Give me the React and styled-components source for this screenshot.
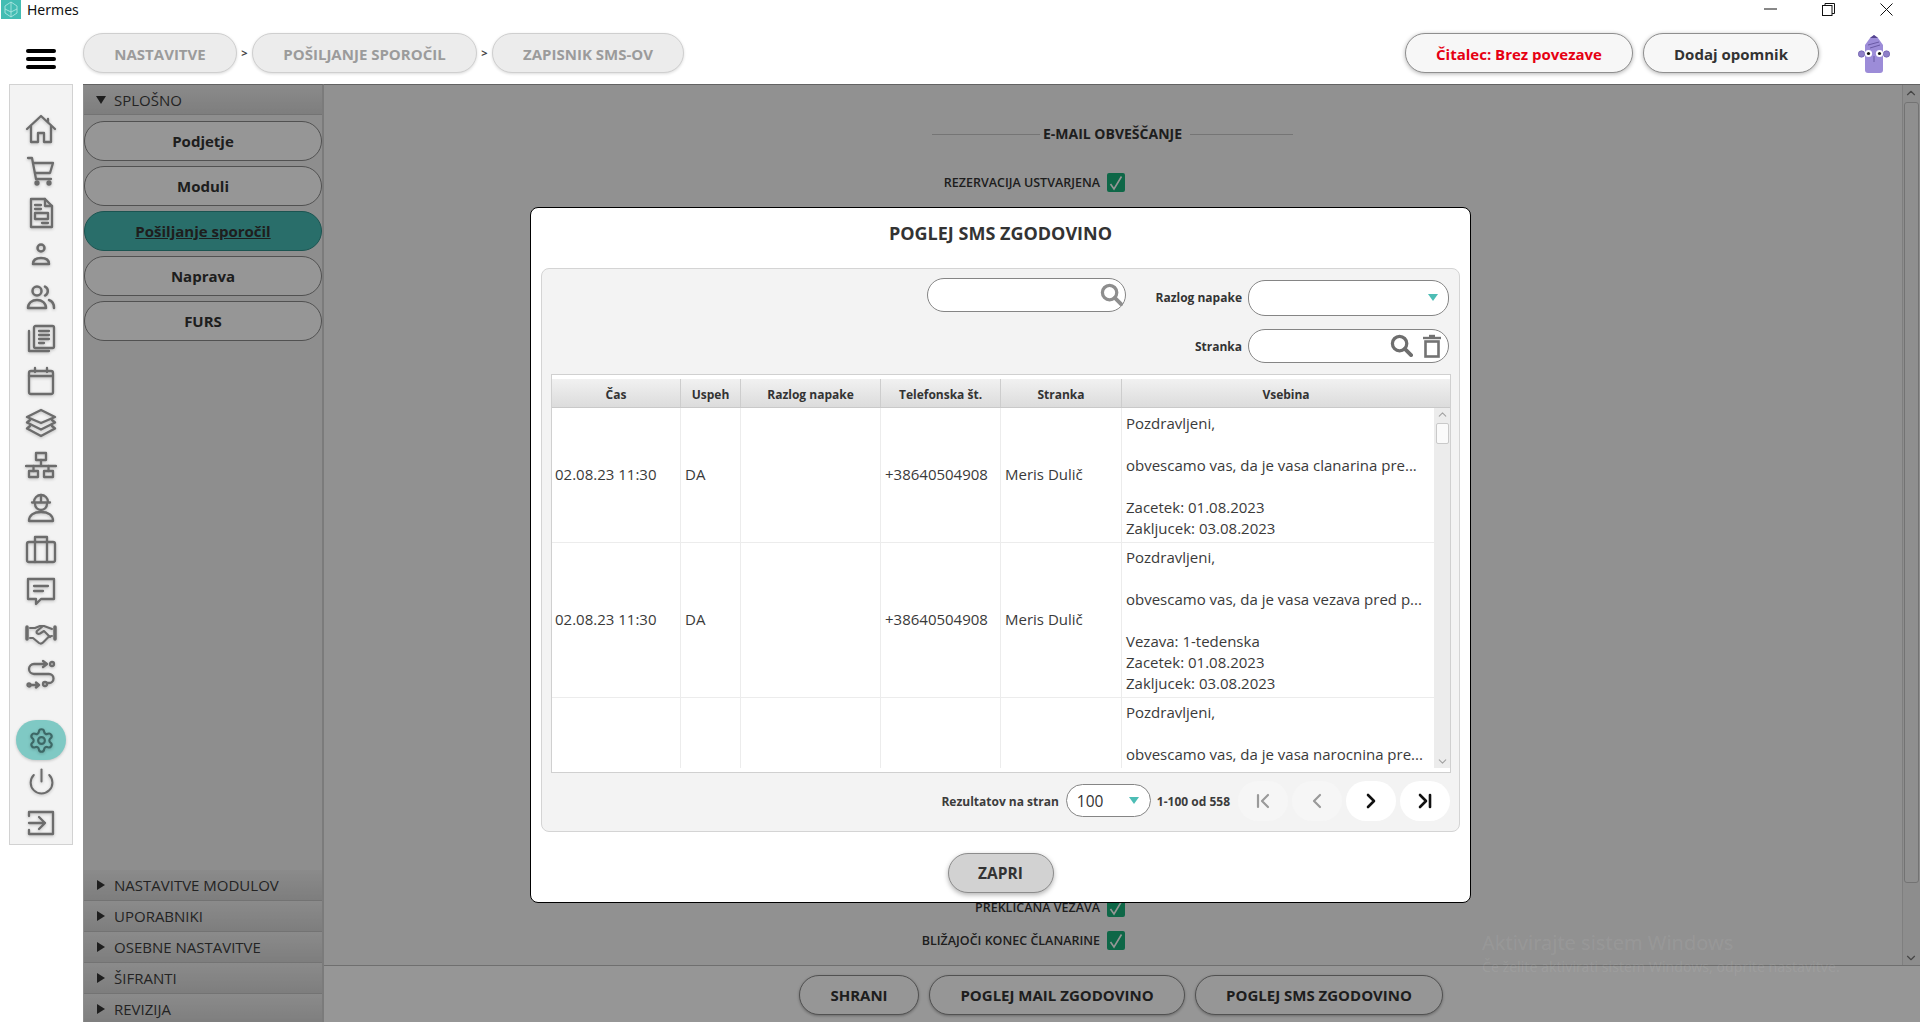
import React from 'react';
import styled, { createGlobalStyle } from 'styled-components';
import { Settings, Power, ChevronFirst, ChevronLeft, ChevronRight, ChevronLast, ChevronUp, ChevronDown } from 'lucide-react';

const Global = createGlobalStyle`
  html, body { margin: 0; padding: 0; background: #fff; }
  * { box-sizing: border-box; }
  #root { width: 1920px; height: 1022px; overflow: hidden; }
`;

const Page = styled.div`
  position: relative;
  width: 1920px;
  height: 1022px;
  overflow: hidden;
  background: #fff;
  font-family: "Open Sans", "Noto Sans", "Liberation Sans", sans-serif;
  color: #333;
`;

/* ---------- header ---------- */
const Header = styled.header`
  height: 84px;
  display: flex;
  flex-direction: column;
`;
const TitleBar = styled.div`
  height: 20px;
  display: flex;
  align-items: flex-start;
  padding: 0 5px 0 1px;
`;
const AppLogo = styled.svg`
  width: 20px;
  height: 19px;
  display: block;
`;
const AppName = styled.span`
  margin-left: 6px;
  font-size: 14px;
  line-height: 19px;
  color: #111;
  font-family: "Noto Sans", "Open Sans", sans-serif;
`;
const WindowControls = styled.div`
  margin-left: auto;
  display: flex;
`;
const WindowButton = styled.div`
  width: 58px;
  height: 18px;
  display: flex;
  align-items: center;
  justify-content: center;
  svg { display: block; }
`;
const Toolbar = styled.div`
  display: flex;
  align-items: flex-start;
  padding: 13px 30px 0 26px;
`;
const Hamburger = styled.div`
  width: 30px;
  height: 20px;
  margin: 16px 27px 0 0;
  display: flex;
  flex-direction: column;
  justify-content: space-between;
  span {
    display: block;
    height: 4px;
    border-radius: 2px;
    background: #000;
  }
`;
const Crumb = styled.div`
  width: ${(p) => p.$w}px;
  height: 40px;
  border-radius: 20px;
  border: 1px solid #cfcfcf;
  background: #ececec;
  box-shadow: 0 1px 3px rgba(0, 0, 0, 0.14);
  display: flex;
  align-items: center;
  justify-content: center;
  padding-top: 1px;
  font-size: 15px;
  font-weight: 700;
  color: #9b9b9b;
`;
const CrumbSep = styled.span`
  width: 15px;
  text-align: center;
  font-size: 11px;
  font-weight: 700;
  line-height: 40px;
  color: #444;
`;
const RightTools = styled.div`
  margin-left: auto;
  display: flex;
  align-items: flex-start;
  gap: 10px;
`;
const ToolPill = styled.button`
  width: ${(p) => p.$w}px;
  height: 40px;
  border-radius: 20px;
  border: 1px solid #8f8f8f;
  background: #f7f7f7;
  box-shadow: 0 1px 4px rgba(0, 0, 0, 0.3);
  font-family: inherit;
  font-size: 15px;
  font-weight: 700;
  color: ${(p) => (p.$alert ? '#e60012' : '#333')};
  padding: 1px 0 0;
`;
const Mascot = styled.svg`
  width: 32px;
  height: 38px;
  margin: 2px 0 0 29px;
  display: block;
`;

/* ---------- body ---------- */
const Body = styled.div`
  height: 938px;
  display: flex;
  overflow: hidden;
`;
const RailColumn = styled.div`
  width: 83px;
  padding-left: 9px;
`;
const Rail = styled.nav`
  width: 64px;
  height: 761px;
  background: #f3f3f3;
  border: 1px solid #d2d2d2;
  padding-top: 23px;
  display: flex;
  flex-direction: column;
  align-items: center;
`;
const RailSlot = styled.div`
  width: 50px;
  height: ${(p) => (p.$active ? 40 : 42)}px;
  margin-top: ${(p) => (p.$gap ? 24 : 0)}px;
  flex: none;
  display: flex;
  align-items: center;
  justify-content: center;
  border-radius: 20px;
  background: ${(p) => (p.$active ? '#7fc9c4' : 'transparent')};
  box-shadow: ${(p) => (p.$active ? '0 1px 3px rgba(0,0,0,.2)' : 'none')};
  color: ${(p) => (p.$active ? '#3d6866' : '#6c6c6c')};
  svg {
    display: block;
    filter: drop-shadow(0 1px 1.5px rgba(0, 0, 0, 0.22));
  }
`;

const Nav = styled.aside`
  width: 241px;
  height: 938px;
  overflow: hidden;
  background: #f2f2f2;
  border-top: 1px solid #a8a8a8;
  border-right: 2px solid #d2d2d2;
  display: flex;
  flex-direction: column;
  padding-left: 1px;
`;
const SectionHead = styled.div`
  height: ${(p) => p.$h || 31}px;
  flex: none;
  display: flex;
  align-items: center;
  padding-left: 12px;
  background: linear-gradient(#ececec, #d6d6d6);
  border-bottom: 1px solid #c4c4c4;
  font-size: 15px;
  color: #3c3c3c;
`;
const Caret = styled.span`
  width: 0;
  height: 0;
  margin-right: ${(p) => (p.$open ? 8 : 9)}px;
  border-style: solid;
  ${(p) =>
    p.$open
      ? 'border-width: 8px 5.5px 0 5.5px; border-color: #333 transparent transparent transparent;'
      : 'border-width: 5px 0 5px 8px; margin-left: 1px; border-color: transparent transparent transparent #333;'}
`;
const NavButtons = styled.div`
  height: 755px;
  flex: none;
  display: flex;
  flex-direction: column;
  gap: 5px;
  padding-top: 6px;
`;
const NavButton = styled.div`
  height: 40px;
  flex: none;
  border-radius: 20px;
  border: 1.5px solid ${(p) => (p.$active ? '#2f8f8a' : '#8a8a8a')};
  background: ${(p) => (p.$active ? '#47bcb5' : '#fff')};
  display: flex;
  align-items: center;
  justify-content: center;
  font-size: 15px;
  font-weight: 700;
  color: #333;
  text-decoration: ${(p) => (p.$active ? 'underline' : 'none')};
`;

const Content = styled.main`
  flex: 1;
  display: flex;
  flex-direction: column;
  min-width: 0;
  border-top: 1px solid #a8a8a8;
`;
const ContentTop = styled.div`
  flex: 1;
  display: flex;
  background: #f7f7f7;
  min-height: 0;
`;
const Form = styled.div`
  flex: 1;
  display: flex;
  flex-direction: column;
  padding-top: 39px;
`;
const FormHeading = styled.div`
  display: grid;
  grid-template-columns: 1fr auto 720px;
  align-items: center;
  font-size: 14px;
  font-weight: 700;
  color: #333;
  line-height: 20px;
`;
const HeadingRule = styled.i`
  display: block;
  height: 1px;
  background: #c8c8c8;
  width: ${(p) => p.$w}px;
  margin: ${(p) => p.$m};
`;
const FormRow = styled.label`
  display: grid;
  grid-template-columns: 1fr 18px 770px;
  column-gap: 7px;
  align-items: center;
  margin-top: ${(p) => p.$mt}px;
  height: 19px;
  font-size: 12.5px;
  font-weight: 600;
  color: #333;
  span { justify-self: end; }
`;
const CheckBox = styled.div`
  width: 18px;
  height: 19px;
  border-radius: 2px;
  background: #18b07a;
  display: flex;
  align-items: center;
  justify-content: center;
  svg { display: block; }
`;
const PageScroll = styled.div`
  width: 18px;
  flex: none;
  border-left: 1px solid #d8d8d8;
  background: #f0f0f0;
  display: flex;
  flex-direction: column;
  align-items: center;
  color: #777;
  padding: 1px 1px 0 0;
`;
const PageThumb = styled.div`
  width: 15px;
  height: 781px;
  margin-top: 2px;
  flex: none;
  border: 1px solid #c4c4c4;
  border-radius: 3px;
  background: #f4f4f4;
`;
const ScrollSpacer = styled.div`
  flex: 1;
`;
const BottomBar = styled.div`
  height: 57px;
  flex: none;
  background: #fff;
  border-top: 1px solid #bdbdbd;
  display: flex;
  justify-content: center;
  gap: 10px;
  padding: 9px 2px 0 0;
`;
const ActionButton = styled.button`
  width: ${(p) => p.$w}px;
  height: 40px;
  border-radius: 20px;
  border: 1.5px solid #8a8a8a;
  background: #fff;
  box-shadow: 0 1px 3px rgba(0, 0, 0, 0.3);
  font-family: inherit;
  font-size: 15px;
  font-weight: 700;
  color: #333;
  padding: 0;
`;

/* ---------- overlay ---------- */
const Backdrop = styled.div`
  position: absolute;
  left: 83px;
  top: 84px;
  right: 0;
  bottom: 0;
  background: rgba(0, 0, 0, 0.41);
`;
const Watermark = styled.div`
  position: absolute;
  left: 1482px;
  top: 929px;
  color: rgba(255, 255, 255, 0.085);
  font-family: "Noto Sans", sans-serif;
  font-size: 20px;
  line-height: 28px;
  small {
    display: block;
    font-size: 14.1px;
    line-height: 20px;
  }
`;
const ModalLayer = styled.div`
  position: absolute;
  left: 83px;
  top: 84px;
  right: 0;
  bottom: 0;
  display: flex;
  align-items: center;
  justify-content: center;
  padding: 4px 2px 0 0;
`;
const Modal = styled.section`
  width: 941px;
  height: 696px;
  background: #fff;
  border: 1.5px solid #000;
  border-radius: 8px;
  padding: 0 10px;
  display: flex;
  flex-direction: column;
`;
const ModalTitle = styled.h2`
  margin: 0;
  height: 59.5px;
  flex: none;
  display: flex;
  align-items: center;
  justify-content: center;
  padding-bottom: 10px;
  font-size: 18px;
  font-weight: 700;
  color: #333;
`;
const Panel = styled.div`
  height: 564px;
  flex: none;
  background: #f3f3f3;
  border: 1px solid #d4d4d4;
  border-radius: 8px;
  padding: 9px 8px 10px 9px;
  display: flex;
  flex-direction: column;
`;
const FilterRow = styled.div`
  display: flex;
  justify-content: flex-end;
  padding-right: 2px;
  height: ${(p) => p.$h}px;
  margin-top: ${(p) => p.$mt || 0}px;
  flex: none;
`;
const FilterLabel = styled.span`
  font-size: 12px;
  font-weight: 700;
  color: #333;
  margin-right: 6px;
  align-self: center;
  padding-top: ${(p) => p.$pt || 0}px;
`;
const InputShell = styled.div`
  width: ${(p) => p.$w}px;
  height: ${(p) => p.$h}px;
  margin: ${(p) => p.$m || 0};
  align-self: ${(p) => p.$align || 'flex-start'};
  border: 1px solid #858585;
  border-radius: 17px;
  background: #fff;
  display: flex;
  align-items: center;
  justify-content: flex-end;
  padding-right: ${(p) => p.$pr || 4}px;
  gap: ${(p) => p.$gap || 0}px;
  svg { display: block; }
`;
const Triangle = styled.i`
  display: block;
  width: 0;
  height: 0;
  border-style: solid;
  border-width: 7px 5.5px 0 5.5px;
  border-color: #4dbdb5 transparent transparent transparent;
`;

const TableFrame = styled.div`
  height: 399px;
  margin-top: 11px;
  flex: none;
  background: #fff;
  border: 1px solid #d0d0d0;
  padding-top: 4px;
  display: flex;
  flex-direction: column;
`;
const GridRow = styled.div`
  display: grid;
  grid-template-columns: 128px 60px 140px 120px 121px 1fr;
`;
const TableHead = styled(GridRow)`
  height: 29px;
  flex: none;
  background: linear-gradient(#f1f1f1, #dcdcdc);
  border-bottom: 1px solid #c9c9c9;
`;
const HeadCell = styled.div`
  display: flex;
  align-items: center;
  justify-content: center;
  padding-top: 3px;
  font-size: 12px;
  font-weight: 700;
  color: #333;
  border-left: ${(p) => (p.$first ? 'none' : '1px solid #cdcdcd')};
`;
const TableBody = styled.div`
  height: 360px;
  flex: none;
  display: flex;
`;
const Rows = styled.div`
  flex: 1;
  min-width: 0;
  overflow: hidden;
  display: flex;
  flex-direction: column;
`;
const Row = styled(GridRow)`
  flex: ${(p) => (p.$fill ? '1' : 'none')};
  border-bottom: ${(p) => (p.$fill ? 'none' : '1px solid #ececec')};
`;
const Cell = styled.div`
  display: flex;
  align-items: center;
  padding: 4px 4px 4px ${(p) => (p.$first ? 3 : 4)}px;
  font-size: 15px;
  line-height: 21px;
  color: #3a3a3a;
  white-space: nowrap;
  border-left: ${(p) => (p.$first ? 'none' : '1px solid #ececec')};
`;
const MessageCell = styled.div`
  padding: ${(p) => p.$pt}px 4px 3px;
  font-size: 15px;
  line-height: 21px;
  color: #3a3a3a;
  white-space: pre;
  border-left: 1px solid #ececec;
`;
const MiniScroll = styled.div`
  width: 16px;
  flex: none;
  background: #ececec;
  display: flex;
  flex-direction: column;
  align-items: center;
  color: #a2a2a2;
  svg { display: block; flex: none; }
`;
const MiniThumb = styled.div`
  width: 13px;
  height: 21px;
  margin-top: 2px;
  flex: none;
  background: #fafafa;
  border: 1px solid #c9c9c9;
  border-radius: 2px;
`;
const Pager = styled.div`
  height: 40px;
  margin-top: 8px;
  flex: none;
  display: flex;
  align-items: center;
  justify-content: flex-end;
  padding-right: 1px;
`;
const PagerText = styled.span`
  font-size: 12px;
  font-weight: 700;
  color: #3c3c3c;
  margin: ${(p) => p.$m};
  padding-top: 1px;
`;
const PageSize = styled.div`
  width: 85px;
  height: 33px;
  border: 1px solid #858585;
  border-radius: 17px;
  background: #fff;
  display: flex;
  align-items: center;
  justify-content: space-between;
  padding: 0 11px 0 10px;
  font-size: 15.5px;
  color: #333;
`;
const PagerButtons = styled.div`
  display: flex;
  gap: 4px;
  margin-left: 8px;
`;
const PagerButton = styled.div`
  width: 50px;
  height: 40px;
  border-radius: 20px;
  display: flex;
  align-items: center;
  justify-content: center;
  background: ${(p) => (p.$off ? '#f6f6f6' : '#fff')};
  color: ${(p) => (p.$off ? '#9a9a9a' : '#111')};
  svg { display: block; }
`;
const CloseArea = styled.div`
  flex: 1;
  display: flex;
  justify-content: center;
  padding-top: 21px;
`;
const CloseButton = styled.button`
  width: 106px;
  height: 40px;
  border-radius: 20px;
  border: 1px solid #8c8c8c;
  background: #d2d2d2;
  box-shadow: 0 2px 5px rgba(0, 0, 0, 0.3);
  font-family: inherit;
  font-size: 15.5px;
  font-weight: 700;
  color: #333;
  padding: 1px 0 0;
`;

/* ---------- drawn icons ---------- */
const Ico = ({ children, size = 32, sw = 2.3 }) => (
  <svg width={size} height={size} viewBox="0 0 32 32" fill="none" stroke="currentColor" strokeWidth={sw} strokeLinecap="round" strokeLinejoin="round">
    {children}
  </svg>
);
const HomeIcon = () => (
  <Ico>
    <path d="M2 16 16 3l14 13" />
    <path d="M23 6v3" />
    <path d="M6 13v16h7v-9h6v9h7V13" />
  </Ico>
);
const CartIcon = () => (
  <Ico>
    <path d="M3 3h4l4 21h15" />
    <path d="M8 8h20l-3 10H10" />
    <circle cx="12" cy="28" r="1.500" fill="currentColor" />
    <circle cx="24" cy="28" r="1.500" fill="currentColor" />
  </Ico>
);
const DocIcon = () => (
  <Ico>
    <path d="M6 2h14l7 7v21H6z" />
    <path d="M20 2v7h7" />
    <path d="M10 8h6M10 12h6" />
    <rect x="10" y="16" width="13" height="6" />
    <path d="M17 26h6" />
  </Ico>
);
const PersonIcon = () => (
  <Ico sw={2.500}>
    <circle cx="16" cy="9" r="3.500" />
    <path d="M8 25c0-4 3-6 8-6s8 2 8 6z" />
  </Ico>
);
const PeopleIcon = () => (
  <Ico sw={2.500}>
    <circle cx="12" cy="10" r="4.500" />
    <path d="M20 5.500a5 5 0 0 1 0 9" />
    <path d="M3 27c0-5 4-8 9-8s9 3 9 8z" />
    <path d="M24 19c3 1 5 4 5 8" />
  </Ico>
);
const NewsIcon = () => (
  <Ico>
    <rect x="9" y="3" width="20" height="22" rx="1.500" />
    <path d="M4 8v20h20" />
    <path d="M14 8h10M14 12h10M14 16h10M14 20h5" />
  </Ico>
);
const CalendarIcon = () => (
  <Ico>
    <rect x="4" y="6" width="24" height="23" rx="2" />
    <path d="M4 11h24" />
    <path d="M10 3v4M22 3v4" />
  </Ico>
);
const LayersIcon = () => (
  <Ico sw={2.400}>
    <path d="M16 3 30 10 16 16 2 10z" />
    <path d="M5 13 2 15.500l14 7 14-7-3-2.500" />
    <path d="M5 19l-3 2.500L16 29l14-7.500-3-2.500" />
  </Ico>
);
const NetworkIcon = () => (
  <Ico>
    <rect x="11" y="4" width="10" height="7" />
    <path d="M16 11v5M1 17h30" />
    <rect x="4" y="22" width="9" height="6" />
    <rect x="19" y="22" width="9" height="6" />
    <path d="M8.500 17v5M23.500 17v5" />
  </Ico>
);
const WorkerIcon = () => (
  <Ico>
    <path d="M9 11a7 7 0 0 1 14 0" />
    <path d="M7 11.500h18" />
    <path d="M16 4v7" />
    <path d="M10 13a6 6 0 0 0 12 0" />
    <path d="M4 30c0-6 5-9 12-9s12 3 12 9z" />
  </Ico>
);
const BriefcaseIcon = () => (
  <Ico>
    <rect x="2" y="9" width="28" height="20" rx="2" />
    <path d="M10 9V4h12v5" />
    <path d="M10 9v20M22 9v20" />
  </Ico>
);
const ChatIcon = () => (
  <Ico>
    <path d="M3 4h26v20H16l-5 5v-5H3z" />
    <path d="M9 11h14M9 16h9" />
  </Ico>
);
const HandshakeIcon = () => (
  <Ico sw={2.100}>
    <path d="M2 10v12M30 10v12" strokeWidth="3.500" />
    <path d="M5 11h5l5-2h4l8 3" />
    <path d="M5 21h3l6 5c1.500 1 3 .5 4-.5l6-6 3-.5" />
    <path d="M18 9l-6 5c-1.500 2 1 3.500 3 2.500l4-2.500 6 6" />
  </Ico>
);
const RouteIcon = () => (
  <Ico>
    <path d="M21 5H9a5 5 0 0 0 0 10h15a4.500 4.500 0 0 1 0 9h-1" />
    <path d="M18 2l4 3-4 3" />
    <circle cx="27" cy="5" r="2" />
    <circle cx="20" cy="25" r="2" />
    <circle cx="4" cy="26" r="1.500" />
    <path d="M6 26h7M11 23.500 14 26l-3 2.500" />
  </Ico>
);
const ExitIcon = () => (
  <Ico>
    <path d="M4 9V5h24v22H4v-4" />
    <path d="M4 16h16M14 10l6 6-6 6" />
  </Ico>
);
const LensIcon = ({ size, color }) => (
  <svg width={size} height={size} viewBox="0 0 24 24" fill="none" stroke={color}>
    <circle cx="10" cy="10" r="7.500" strokeWidth="3.400" />
    <path d="M15.500 15.500 22 22" strokeWidth="4" strokeLinecap="round" />
  </svg>
);
const TrashIcon = () => (
  <svg width="20" height="24" viewBox="0 0 20 24" fill="none" stroke="#737373">
    <path d="M1 4h18" strokeWidth="2.400" />
    <path d="M7 2h6" strokeWidth="2.400" />
    <rect x="3.500" y="7.500" width="13" height="15" strokeWidth="2.600" />
  </svg>
);
const Tick = () => (
  <svg width="14" height="16" viewBox="0 0 14 16" fill="none" stroke="#fff" strokeWidth="1.600">
    <path d="M1.500 9l3.500 5L12.500 1.500" />
  </svg>
);

const railIcons = [
  <HomeIcon key="a" />, <CartIcon key="b" />, <DocIcon key="c" />, <PersonIcon key="d" />,
  <PeopleIcon key="e" />, <NewsIcon key="f" />, <CalendarIcon key="g" />, <LayersIcon key="h" />,
  <NetworkIcon key="i" />, <WorkerIcon key="j" />, <BriefcaseIcon key="k" />, <ChatIcon key="l" />,
  <HandshakeIcon key="m" />, <RouteIcon key="n" />,
];

const navItems = ['Podjetje', 'Moduli', 'Pošiljanje sporočil', 'Naprava', 'FURS'];
const lowerSections = ['NASTAVITVE MODULOV', 'UPORABNIKI', 'OSEBNE NASTAVITVE', 'ŠIFRANTI', 'REVIZIJA'];
const headers = ['Čas', 'Uspeh', 'Razlog napake', 'Telefonska št.', 'Stranka', 'Vsebina'];
const rows = [
  {
    pt: 5, time: '02.08.23 11:30', ok: 'DA', phone: '+38640504908', client: 'Meris Dulič',
    text: 'Pozdravljeni,\n\nobvescamo vas, da je vasa clanarina pre...\n\nZacetek: 01.08.2023\nZakljucek: 03.08.2023',
  },
  {
    pt: 4, time: '02.08.23 11:30', ok: 'DA', phone: '+38640504908', client: 'Meris Dulič',
    text: 'Pozdravljeni,\n\nobvescamo vas, da je vasa vezava pred p...\n\nVezava: 1-tedenska\nZacetek: 01.08.2023\nZakljucek: 03.08.2023',
  },
  { pt: 4, fill: true, text: 'Pozdravljeni,\n\nobvescamo vas, da je vasa narocnina pre...' },
];

export default function App() {
  return (
    <Page>
      <Global />
      <Header>
        <TitleBar>
          <AppLogo viewBox="0 0 20 19">
            <rect width="20" height="19" fill="#43bdb3" />
            <path d="M10 2 4 6v7l6 4 6-4V6zM10 2v15M4 9l6 3 6-3" fill="none" stroke="#b9ebe6" strokeWidth="0.8" />
          </AppLogo>
          <AppName>Hermes</AppName>
          <WindowControls>
            <WindowButton>
              <svg width="13" height="13" viewBox="0 0 13 13"><path d="M0 6h13" stroke="#111" strokeWidth="1" /></svg>
            </WindowButton>
            <WindowButton>
              <svg width="13" height="13" viewBox="0 0 13 13" fill="none" stroke="#111"><rect x="0.500" y="2.500" width="9.500" height="10" /><path d="M3 2.500V.5h9.500v10H10" /></svg>
            </WindowButton>
            <WindowButton>
              <svg width="13" height="13" viewBox="0 0 13 13"><path d="M.5.5l12 12M12.500.5l-12 12" stroke="#111" strokeWidth="1" /></svg>
            </WindowButton>
          </WindowControls>
        </TitleBar>
        <Toolbar>
          <Hamburger><span /><span /><span /></Hamburger>
          <Crumb $w={154}>NASTAVITVE</Crumb>
          <CrumbSep>&gt;</CrumbSep>
          <Crumb $w={225}>POŠILJANJE SPOROČIL</Crumb>
          <CrumbSep>&gt;</CrumbSep>
          <Crumb $w={192}>ZAPISNIK SMS-OV</Crumb>
          <RightTools>
            <ToolPill $w={228} $alert>Čitalec: Brez povezave</ToolPill>
            <ToolPill $w={176}>Dodaj opomnik</ToolPill>
            <Mascot viewBox="0 0 32 38">
              <path d="M16 0l4 3 5 7v25a3 3 0 0 1-3 3H10a3 3 0 0 1-3-3V10l5-7z" fill="#9c8cd8" />
              <path d="M12 3l4-3 4 3z" fill="#55458f" />
              <circle cx="3.500" cy="19" r="3.200" fill="#8f80c9" stroke="#6d5fab" strokeWidth="0.700" />
              <circle cx="28.500" cy="19" r="3.200" fill="#8f80c9" stroke="#6d5fab" strokeWidth="0.700" />
              <circle cx="10.500" cy="18.500" r="3.600" fill="#fff" />
              <circle cx="21.500" cy="18.500" r="3.600" fill="#fff" />
              <circle cx="10.500" cy="18.500" r="1.600" fill="#111" />
              <circle cx="21.500" cy="18.500" r="1.600" fill="#111" />
              <path d="M16 21v6M10 10l11-3M12 13l10-3" stroke="#55458f" strokeWidth="0.700" fill="none" />
            </Mascot>
          </RightTools>
        </Toolbar>
      </Header>

      <Body>
        <RailColumn>
          <Rail>
            {railIcons.map((icon, i) => <RailSlot key={i}>{icon}</RailSlot>)}
            <RailSlot $active $gap><Settings size={27} strokeWidth={1.9} /></RailSlot>
            <RailSlot><Power size={29} strokeWidth={1.7} /></RailSlot>
            <RailSlot><ExitIcon /></RailSlot>
          </Rail>
        </RailColumn>

        <Nav>
          <SectionHead $h={30}><Caret $open />SPLOŠNO</SectionHead>
          <NavButtons>
            {navItems.map((n, i) => <NavButton key={n} $active={i === 2}>{n}</NavButton>)}
          </NavButtons>
          {lowerSections.map((s) => <SectionHead key={s}><Caret />{s}</SectionHead>)}
        </Nav>

        <Content>
          <ContentTop>
            <Form>
              <FormHeading>
                <HeadingRule $w={108} $m="0 3px 0 auto" />
                E-MAIL OBVEŠČANJE
                <HeadingRule $w={103} $m="0 0 0 8px" />
              </FormHeading>
              <FormRow $mt={29}><span>REZERVACIJA USTVARJENA</span><CheckBox><Tick /></CheckBox></FormRow>
              <FormRow $mt={706}><span>PREKLICANA VEZAVA</span><CheckBox><Tick /></CheckBox></FormRow>
              <FormRow $mt={14}><span>BLIŽAJOČI KONEC ČLANARINE</span><CheckBox><Tick /></CheckBox></FormRow>
            </Form>
            <PageScroll>
              <ChevronUp size={14} />
              <PageThumb />
              <ScrollSpacer />
              <ChevronDown size={14} />
            </PageScroll>
          </ContentTop>
          <BottomBar>
            <ActionButton $w={120}>SHRANI</ActionButton>
            <ActionButton $w={256}>POGLEJ MAIL ZGODOVINO</ActionButton>
            <ActionButton $w={248}>POGLEJ SMS ZGODOVINO</ActionButton>
          </BottomBar>
        </Content>
      </Body>

      <Backdrop />
      <Watermark>
        Aktivirajte sistem Windows
        <small>Če želite aktivirati sistem Windows, odprite nastavitve.</small>
      </Watermark>

      <ModalLayer>
        <Modal>
          <ModalTitle>POGLEJ SMS ZGODOVINO</ModalTitle>
          <Panel>
            <FilterRow $h={38}>
              <InputShell $w={199} $h={34} $m="0 29px 0 0" $pr={2}>
                <LensIcon size={23} color="#8e8e8e" />
              </InputShell>
              <FilterLabel $pt={2}>Razlog napake</FilterLabel>
              <InputShell $w={201} $h={36} $align="flex-end" $pr={10}><Triangle /></InputShell>
            </FilterRow>
            <FilterRow $h={34} $mt={13}>
              <FilterLabel $pt={1}>Stranka</FilterLabel>
              <InputShell $w={201} $h={34} $pr={6} $gap={9}>
                <LensIcon size={23} color="#6e6e6e" />
                <TrashIcon />
              </InputShell>
            </FilterRow>
            <TableFrame>
              <TableHead>
                {headers.map((h, i) => <HeadCell key={h} $first={i === 0}>{h}</HeadCell>)}
              </TableHead>
              <TableBody>
                <Rows>
                  {rows.map((r, i) => (
                    <Row key={i} $fill={r.fill}>
                      <Cell $first>{r.time}</Cell>
                      <Cell>{r.ok}</Cell>
                      <Cell />
                      <Cell>{r.phone}</Cell>
                      <Cell>{r.client}</Cell>
                      <MessageCell $pt={r.pt}>{r.text}</MessageCell>
                    </Row>
                  ))}
                </Rows>
                <MiniScroll>
                  <ChevronUp size={13} />
                  <MiniThumb />
                  <ScrollSpacer />
                  <ChevronDown size={13} />
                </MiniScroll>
              </TableBody>
            </TableFrame>
            <Pager>
              <PagerText $m="0 7px 0 0">Rezultatov na stran</PagerText>
              <PageSize>100<Triangle /></PageSize>
              <PagerText $m="0 0 0 6px">1-100 od 558</PagerText>
              <PagerButtons>
                <PagerButton $off><ChevronFirst size={24} strokeWidth={2.2} /></PagerButton>
                <PagerButton $off><ChevronLeft size={24} strokeWidth={2.2} /></PagerButton>
                <PagerButton><ChevronRight size={24} strokeWidth={2.6} /></PagerButton>
                <PagerButton><ChevronLast size={24} strokeWidth={2.6} /></PagerButton>
              </PagerButtons>
            </Pager>
          </Panel>
          <CloseArea><CloseButton>ZAPRI</CloseButton></CloseArea>
        </Modal>
      </ModalLayer>
    </Page>
  );
}
